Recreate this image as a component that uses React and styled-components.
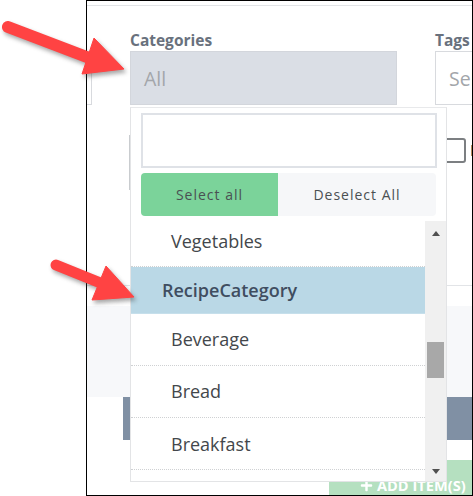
import React from "react";
import styled, { createGlobalStyle } from "styled-components";
import { FaPlus } from "react-icons/fa";

const GlobalStyle = createGlobalStyle`
  html, body {
    margin: 0;
    padding: 0;
    background: #fff;
    font-family: "Open Sans", "Liberation Sans", sans-serif;
  }
`;

const Page = styled.div`
  position: relative;
  width: 473px;
  height: 496px;
  padding-left: 86px;
  box-sizing: border-box;
  overflow: hidden;
`;

const Frame = styled.div`
  position: relative;
  width: 387px;
  height: 496px;
  box-sizing: border-box;
  border: 1px solid #000;
  overflow: hidden;
  display: flex;
  flex-direction: column;
`;

const TopRule = styled.div`
  height: 1px;
  margin-top: 4px;
  background: #e2e4e7;
  flex-shrink: 0;
`;

const FieldRow = styled.div`
  display: flex;
  align-items: flex-end;
  margin-top: 26px;
  flex-shrink: 0;
`;

const Field = styled.div`
  display: flex;
  flex-direction: column;
  flex-shrink: 0;
  margin-left: ${(props) => props.offset || `0`};
`;

const Label = styled.label`
  height: 19px;
  line-height: 16px;
  font-size: 15.5px;
  font-weight: 700;
  color: #69717d;
`;

const SelectBox = styled.div`
  width: ${(props) => props.width};
  height: 54px;
  box-sizing: border-box;
  padding-left: 13px;
  line-height: 53px;
  font-size: 19.5px;
  white-space: nowrap;
  color: #a3a6aa;
  background: ${(props) => (props.active ? `#dadee5` : `#fff`)};
  border: 1px solid ${(props) => (props.active ? `#d3d6dc` : `#d8dade`)};
`;

const StubBox = styled.div`
  width: 5px;
  height: 54px;
  box-sizing: border-box;
  flex-shrink: 0;
  border: 1px solid #d8dade;
  border-left: none;
`;

const OptionRow = styled.div`
  display: flex;
  height: 180px;
  flex-shrink: 0;
`;

const HiddenEdge = styled.div`
  width: 2px;
  margin-left: 42px;
  padding-top: 18px;
  flex-shrink: 0;
`;

const EdgeDot = styled.div`
  width: 1px;
  height: 5px;
  margin-left: 1px;
  background: #f0c894;
`;

const EdgeBar = styled.div`
  width: 2px;
  height: 55px;
  margin-top: 7px;
  background: #c9cccf;
`;

const Checkbox = styled.div`
  width: 24px;
  height: 25px;
  margin: 33px 0 0 311px;
  box-sizing: border-box;
  flex-shrink: 0;
  border: 2px solid #7c7f82;
  border-radius: 3px;
`;

const OptionText = styled.div`
  width: 2px;
  height: 11px;
  margin: 40px 0 0 5px;
  flex-shrink: 0;
  background: #b98d60;
`;

const SectionRule = styled.div`
  height: 1px;
  background: #e2e4e7;
  flex-shrink: 0;
`;

const SoftPanel = styled.div`
  height: 91px;
  margin-top: 20px;
  background: #f7f8fa;
  flex-shrink: 0;
`;

const HeadBar = styled.div`
  height: 43px;
  margin-left: 36px;
  background: #8090a4;
  flex-shrink: 0;
`;

const AddRow = styled.div`
  display: flex;
  justify-content: flex-end;
  margin-top: 20px;
  flex-shrink: 0;
`;

const AddButton = styled.button`
  display: flex;
  align-items: center;
  gap: 4px;
  width: 143px;
  height: 40px;
  padding: 10px 0 0 31px;
  box-sizing: border-box;
  border: none;
  background: #b5e0c0;
  color: #fff;
  font-family: inherit;
  font-size: 14.6px;
  font-weight: 700;
  white-space: nowrap;
`;

const Dropdown = styled.div`
  position: absolute;
  top: 106px;
  left: 43px;
  width: 317px;
  height: 375px;
  box-sizing: border-box;
  display: flex;
  flex-direction: column;
  background: #fff;
  border: 1px solid #e3e4e6;
  border-top-color: #e8e9eb;
`;

const DropHead = styled.div`
  padding: 5px 9px 0 10px;
  flex-shrink: 0;
`;

const SearchInput = styled.input`
  display: block;
  width: 100%;
  height: 55px;
  box-sizing: border-box;
  background: #fff;
  border: 2px solid #dfe2e7;
  outline: none;
`;

const ButtonRow = styled.div`
  display: flex;
  height: 43px;
  margin-top: 5px;
`;

const ToggleButton = styled.button`
  width: ${(props) => props.width};
  height: 43px;
  padding: 0;
  border: none;
  border-radius: ${(props) => (props.selected ? `4px 0 0 4px` : `0 4px 4px 0`)};
  background: ${(props) => (props.selected ? `#7bd39a` : `#f6f7f9`)};
  color: #4a5052;
  font-family: inherit;
  font-size: 14px;
  letter-spacing: 1px;
`;

const ListArea = styled.div`
  display: flex;
  flex: 1;
  min-height: 0;
  margin-top: 5px;
`;

const OptionList = styled.ul`
  flex: 1;
  margin: 0;
  padding: 0;
  list-style: none;
  overflow: hidden;
`;

const Option = styled.li`
  height: ${(props) => props.height};
  box-sizing: border-box;
  padding-left: 40px;
  line-height: ${(props) => props.lineHeight};
  font-size: 18px;
  color: #43474b;
  border-bottom: 1px dotted #cfd1d3;
`;

const GroupOption = styled.li`
  height: 47px;
  box-sizing: border-box;
  padding-left: 31px;
  line-height: 47px;
  font-size: 18px;
  font-weight: 600;
  color: #3f4d60;
  background: #bad8e6;
  border-bottom: 1px solid #c6dfeb;
`;

const ScrollTrack = styled.div`
  width: 21px;
  display: flex;
  flex-direction: column;
  align-items: center;
  padding: 10px 0 7px;
  box-sizing: border-box;
  background: #f0f0f0;
  flex-shrink: 0;
`;

const ScrollArrow = styled.div`
  width: 0;
  height: 0;
  border-left: 4.5px solid transparent;
  border-right: 4.5px solid transparent;
  border-${(props) => (props.down ? `top` : `bottom`)}: 5px solid #505050;
  margin-top: ${(props) => (props.down ? `auto` : `0`)};
`;

const ScrollThumb = styled.div`
  width: 17px;
  height: 36px;
  margin-top: 106px;
  background: #a8a8a8;
`;

const ArrowLayer = styled.svg`
  position: absolute;
  top: 0;
  left: 0;
  width: 473px;
  height: 496px;
  pointer-events: none;
  filter: drop-shadow(2px 3px 2px rgba(60, 60, 60, 0.45));
`;

const items = [
  { label: "Beverage", height: "52px", lineHeight: "50px" },
  { label: "Bread", height: "52px", lineHeight: "50px" },
  { label: "Breakfast", height: "52px", lineHeight: "52px" },
];

const App = () => {
  return (
    <Page>
      <GlobalStyle />
      <Frame>
        <TopRule />
        <FieldRow>
          <StubBox />
          <Field offset={`38px`}>
            <Label>Categories</Label>
            <SelectBox active width={`267px`}>
              All
            </SelectBox>
          </Field>
          <Field offset={`38px`}>
            <Label>Tags</Label>
            <SelectBox width={`120px`}>Select</SelectBox>
          </Field>
        </FieldRow>
        <OptionRow>
          <HiddenEdge>
            <EdgeDot />
            <EdgeBar />
          </HiddenEdge>
          <Checkbox />
          <OptionText />
        </OptionRow>
        <SectionRule />
        <SoftPanel />
        <HeadBar />
        <AddRow>
          <AddButton>
            <FaPlus size={13} />
            ADD ITEM(S)
          </AddButton>
        </AddRow>

        <Dropdown>
          <DropHead>
            <SearchInput />
            <ButtonRow>
              <ToggleButton selected width={`137px`}>
                Select all
              </ToggleButton>
              <ToggleButton width={`158px`}>Deselect All</ToggleButton>
            </ButtonRow>
          </DropHead>
          <ListArea>
            <OptionList>
              <Option height={`46px`} lineHeight={`41px`}>
                Vegetables
              </Option>
              <GroupOption>RecipeCategory</GroupOption>
              {items.map((item) => (
                <Option
                  key={item.label}
                  height={item.height}
                  lineHeight={item.lineHeight}
                >
                  {item.label}
                </Option>
              ))}
            </OptionList>
            <ScrollTrack>
              <ScrollArrow />
              <ScrollThumb />
              <ScrollArrow down />
            </ScrollTrack>
          </ListArea>
        </Dropdown>
      </Frame>

      <ArrowLayer viewBox="0 0 473 496">
        <g fill="#ff4343" stroke="#ff4343" strokeLinejoin="round">
          <line x1="8" y1="27" x2="92" y2="59" strokeWidth="12" strokeLinecap="round" />
          <polygon points="94,38 124,69 82,74" strokeWidth="1" />
          <line x1="56" y1="265" x2="103" y2="284" strokeWidth="11" strokeLinecap="round" />
          <polygon points="106,266 134,297 92,300" strokeWidth="1" />
        </g>
      </ArrowLayer>
    </Page>
  );
};

export default App;
